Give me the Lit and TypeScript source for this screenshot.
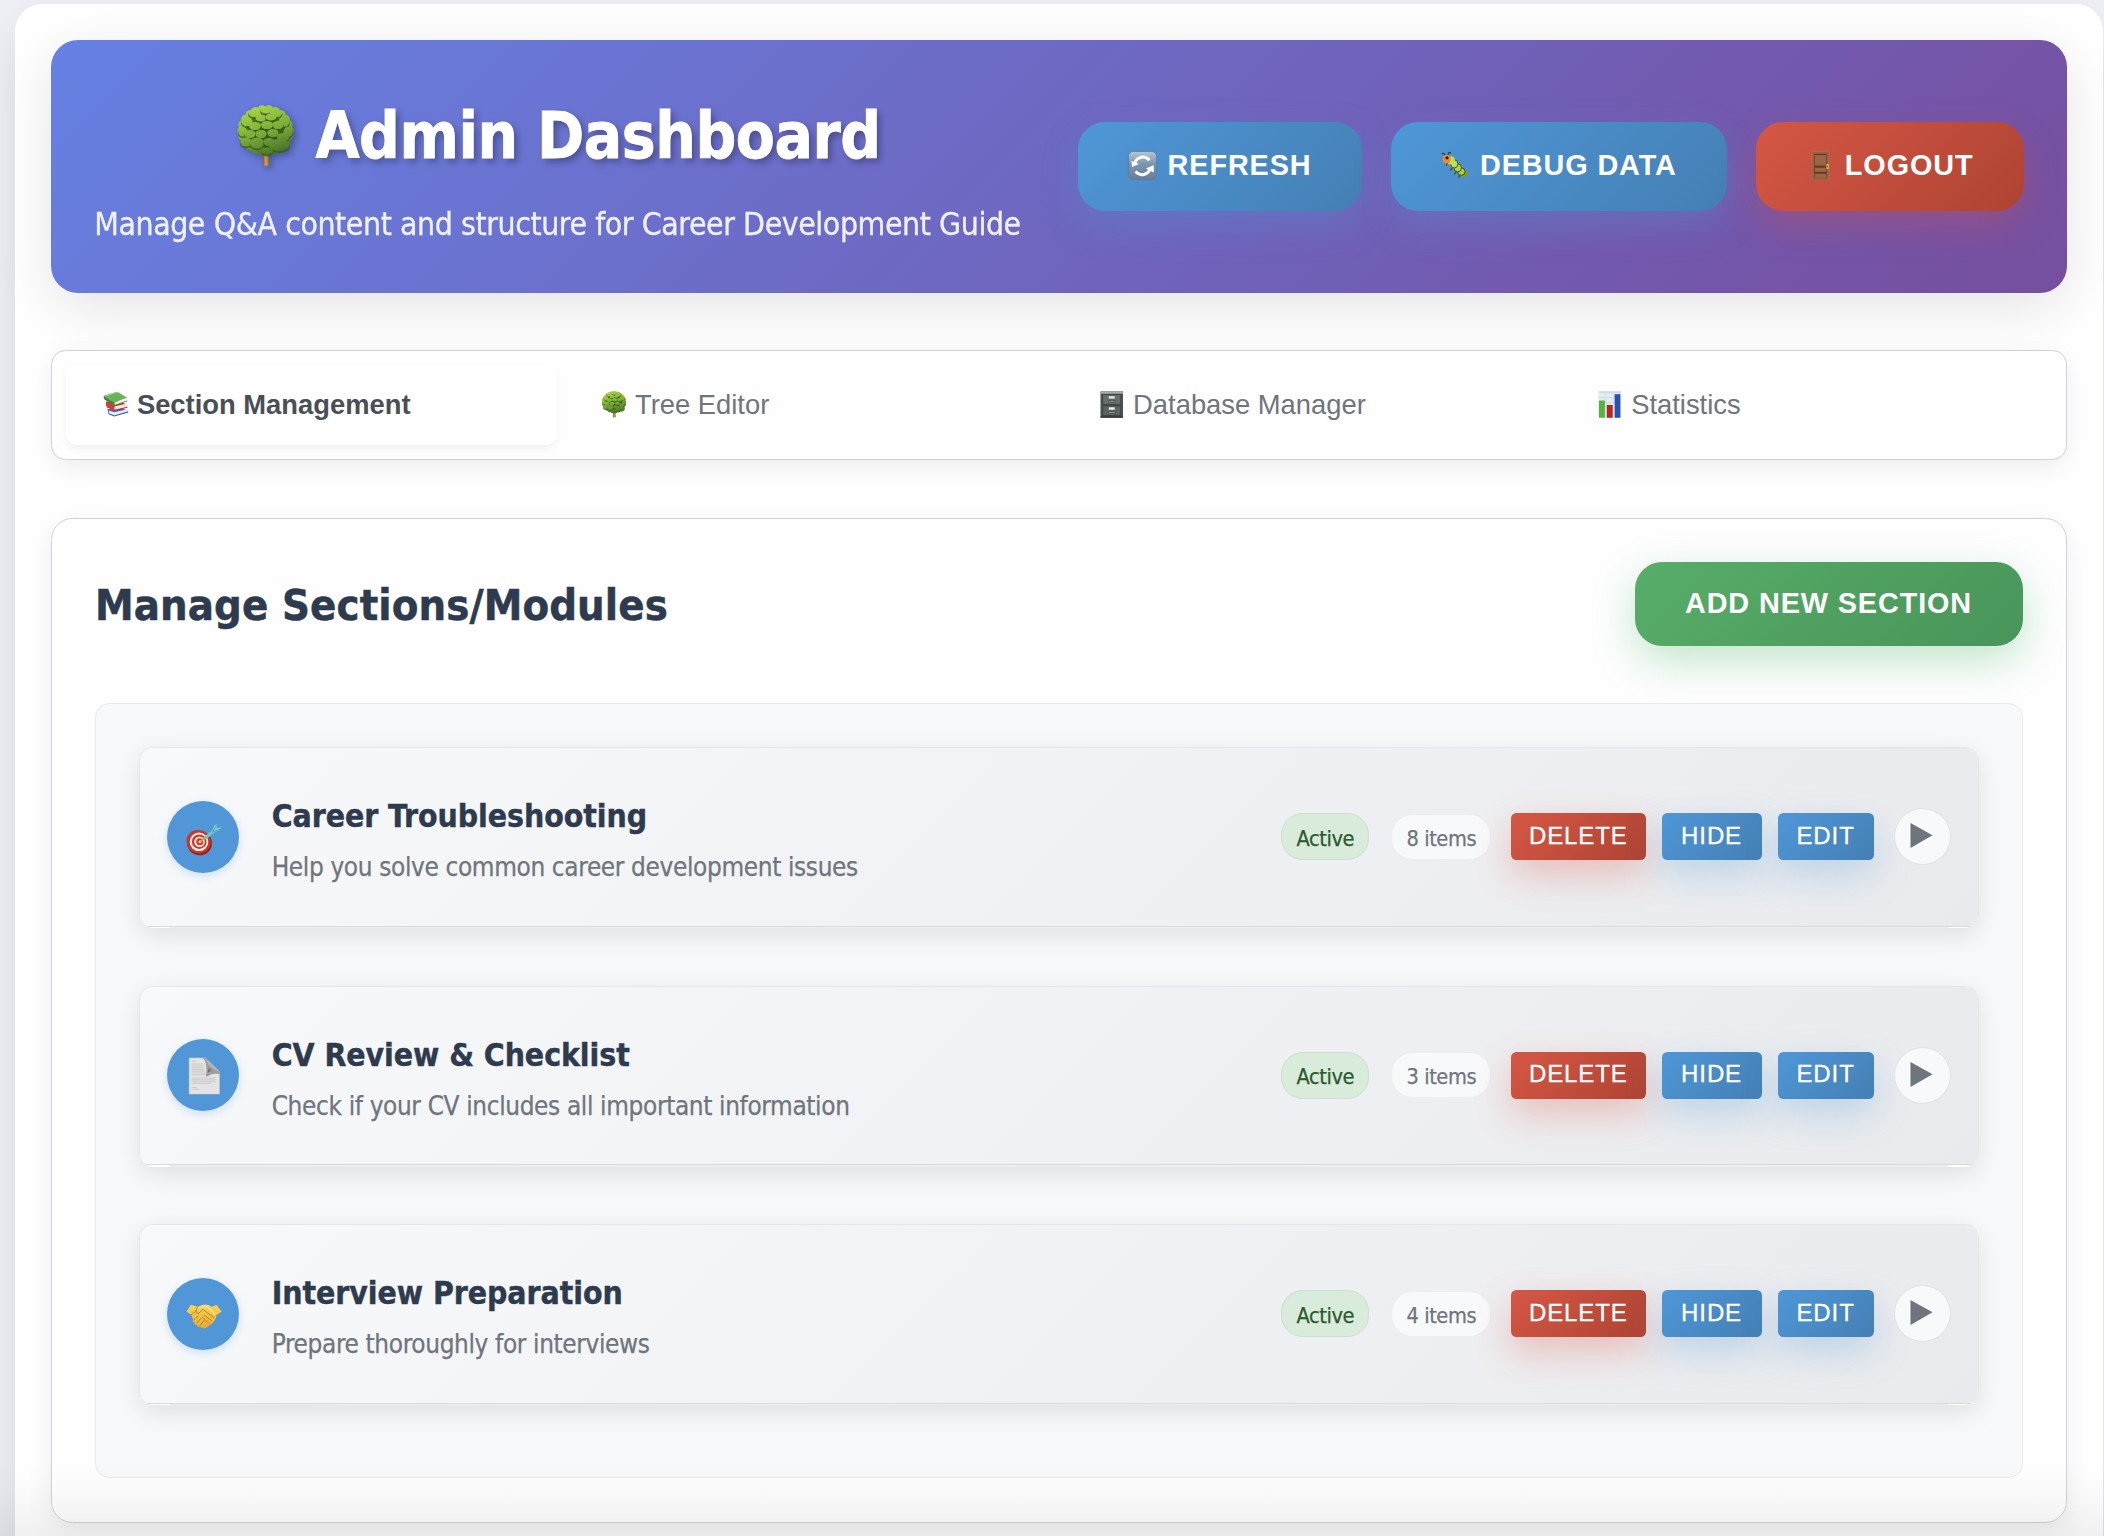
import { LitElement, html, svg, css } from "lit";
import { customElement, property, state } from "lit/decorators.js";
import { classMap } from "lit/directives/class-map.js";

type IconName =
  | "tree" | "refresh" | "bug" | "door" | "books"
  | "cabinet" | "chart" | "target" | "page" | "handshake";

const ring = Array.from({ length: 22 }, (_, i) => {
  const a = (i / 22) * Math.PI * 2;
  return [28.5 + Math.cos(a) * 23.6, 25.5 + Math.sin(a) * 21] as const;
});

/* x, y, rx, ry of the leaf clumps, from the back to the front */
const clumps = [
  [18, 8, 7, 4.5], [29, 5, 6, 4], [39, 8, 6.5, 4.5], [10, 17, 6, 4.5], [47, 17, 6, 5],
  [24, 13, 6, 4], [34, 12, 6, 4], [18, 21, 6.5, 4.5], [41, 20, 6, 4.5], [6, 27, 5, 5],
  [30, 20, 6.5, 4.5], [51, 27, 5, 5.5], [13, 29, 6, 4.5], [36, 28, 6, 4.5], [24, 29, 6, 4.5],
  [46, 32, 6.5, 4.5], [9, 37, 6, 5], [20, 38, 7.5, 6], [32, 37, 6, 4.5], [42, 40, 11, 6.5],
  [30, 46, 6, 4],
];

const icons: Record<IconName, { box: string; body: unknown }> = {
  tree: {
    box: "0 0 58 62",
    body: svg`
      <defs>
        <linearGradient id="leaf" gradientUnits="userSpaceOnUse" x1="20" y1="0" x2="38" y2="52">
          <stop offset="0" stop-color="#a9d649"/><stop offset=".5" stop-color="#7dad38"/><stop offset="1" stop-color="#456d27"/>
        </linearGradient>
        <linearGradient id="back" x1="0" y1="0" x2=".3" y2="1">
          <stop offset="0" stop-color="#5e8e29"/><stop offset="1" stop-color="#2a4817"/>
        </linearGradient>
        <linearGradient id="bark"><stop offset="0" stop-color="#7d5a25"/><stop offset=".45" stop-color="#d3a35a"/><stop offset="1" stop-color="#8a6229"/></linearGradient>
      </defs>
      <path d="M26 46h5.5l.8 14.2q-3.2 1.4-6.4 0z" fill="url(#bark)"/>
      <ellipse cx="28.5" cy="26" rx="26" ry="23.5" fill="url(#back)"/>
      ${ring.map(([x, y]) => svg`<circle cx=${x} cy=${y} r="4.5" fill="url(#leaf)"/>`)}
      ${clumps.map(([x, y, rx, ry]) => svg`
        <ellipse cx=${x} cy=${y + 1.5} rx=${rx} ry=${ry} fill="#35591b" opacity=".7"/>
        <ellipse cx=${x} cy=${y} rx=${rx - 0.4} ry=${ry - 0.4} fill="url(#leaf)"/>`)}`,
  },
  refresh: {
    box: "0 0 29 29",
    body: svg`
      <defs><linearGradient id="key" x1="0" y1="0" x2="0" y2="1">
        <stop offset="0" stop-color="#b3c6d9"/><stop offset=".45" stop-color="#7c95b1"/><stop offset="1" stop-color="#6a7d98"/></linearGradient></defs>
      <rect x=".4" y=".4" width="28.2" height="28.2" rx="5" fill="url(#key)" stroke="#59789a" stroke-width=".8"/>
      <path d="M6.7 12.4a8.4 8.4 0 0 1 14.7-3.2" fill="none" stroke="#fff" stroke-width="3"/>
      <path d="M22.3 17.4a8.4 8.4 0 0 1-14.7 3" fill="none" stroke="#fff" stroke-width="3"/>
      <path d="M3.6 9.7l.4 6.3 7-3z" fill="#fff"/>
      <path d="M25.6 14.2l.2 7.2-8-4z" fill="#fff"/>`,
  },
  bug: {
    box: "0 0 29 29",
    body: svg`
      <path d="M4.5 4.8Q3 1.8.9 2.6M7 3.7Q7.4 1 10 1.7" fill="none" stroke="#31373c" stroke-width="1.3"/>
      <path d="M6 12l-.8 2.8M11 17l-1.5 2.5M15 21l-1.5 2.3M19 24.5l-1.5 2" stroke="#6b4a1e" stroke-width="1.5"/>
      <ellipse cx="23.4" cy="23" rx="3.8" ry="2.9" fill="#7e9a2c"/>
      <ellipse cx="20.3" cy="20.6" rx="3.7" ry="3.8" fill="#a9cc3f" stroke="#2f3b17" stroke-width=".8"/>
      <ellipse cx="16.7" cy="16.8" rx="3.7" ry="4" fill="#b4d847" stroke="#2f3b17" stroke-width=".8"/>
      <ellipse cx="13.3" cy="12.9" rx="3.7" ry="4" fill="#c0e151" stroke="#2f3b17" stroke-width=".8"/>
      <ellipse cx="10" cy="9.4" rx="3.9" ry="4.100" fill="#bfdf50"/>
      <ellipse cx="5.6" cy="8" rx="4" ry="4.200" fill="#ee8a2b"/>
      <circle cx="6" cy="6.8" r="1.600" fill="#2b1a12"/>`,
  },
  door: {
    box: "0 0 29 29",
    body: svg`
      <rect x="5.5" width="18" height="29" fill="#b0694c"/>
      <rect x="6.7" y="1.2" width="15.6" height="27.2" fill="#925d40"/>
      <path d="M8.5 3h11.8v10.500H8.500zM8.500 15.500h11.800v4.500H8.500zM8.500 21.500h11.800v5H8.500z" fill="#9b6546"/>
      <path d="M8.5 3h11.8v1H8.500zM8.500 14.800h11.800v2H8.500zM8.500 21h11.800v1.700H8.500z" fill="#633723"/>
      <path d="M8.5 3v23.500M20.300 3v23.500" stroke="#6f422b" stroke-width=".7"/>
      <rect x="20.3" y="13" width="2.5" height="5" rx="1" fill="#e5c23e"/>
      <circle cx="21.3" cy="15.5" r="1" fill="#8c6a13"/>`,
  },
  books: {
    box: "0 0 27 27",
    body: svg`
      <path d="M4.5 18l14-1.2 7.200 3.200-14.500 4.700-5.700-2z" fill="#4a64b8"/>
      <path d="M6 19.5l5.500 2 13.500-3.200.3 2.700L11.700 24.800l-5.500-2z" fill="#e9eaf2"/>
      <path d="M6 22.5l5.500 2.100 14.200-4.200v1.200L11.600 25.800l-6-2.300z" fill="#3c55a8"/>
      <path d="M3 10.5l14.500-.5 7.500 4.200L11.500 18 4 15z" fill="#c8402c"/>
      <path d="M11.5 15.500L24.600 12.500v3.800l-13.100 3z" fill="#efe8e6"/>
      <path d="M3 11l8.500 3.500v5.200L4 16.600Q2.500 14 3 11z" fill="#d2402c"/>
      <path d="M11.2 19l13.700-3.200v1L11.300 20.200z" fill="#b32a20"/>
      <path d="M.8 4.700L14.500.5l10.300 6L11 11.800z" fill="#6bb25c"/>
      <path d="M.8 4.700L14.500.5l1.200.7L2.300 5.500z" fill="#92cf80"/>
      <path d="M11.500 11.800L24.500 6.600q-1 1.800.3 3.200L12 14.200z" fill="#f0f1ee"/>
      <path d="M.8 4.700L11 11.500q.8 1.400.8 3.400L1.500 8.300Q.4 6.400.8 4.700z" fill="#3c8546"/>
      <path d="M11.7 14L24.800 9.300v1L11.800 15z" fill="#3b7d40"/>`,
  },
  cabinet: {
    box: "0 0 27 27",
    body: svg`
      <rect x="1.5" width="23" height="27" rx="1" fill="#4d5352"/>
      <rect x="1.5" width="23" height="2.6" rx=".8" fill="#a5abaa"/>
      <rect x="3.8" y="3.5" width="18.4" height="10" fill="#686e6c" stroke="#3a3f3e" stroke-width=".8"/>
      <rect x="3.8" y="15" width="18.4" height="9.8" fill="#5d6361" stroke="#3a3f3e" stroke-width=".8"/>
      <path d="M10 5h6v2.400h-6zM10 16.400h6v2.400h-6z" fill="#eceeed"/>
      <path d="M9.500 9.300h7v1.700h-7zM9.500 20.700h7v1.700h-7z" fill="#b4b8b7" stroke="#3b403f" stroke-width=".8"/>
      <path d="M1.5 25.500h23V27h-23z" fill="#333837"/>`,
  },
  chart: {
    box: "0 0 27 27",
    body: svg`
      <rect x="1.5" width="23" height="27" fill="#e3ebf3"/>
      <path d="M1.5 0h23v2h-23z" fill="#d2dbe3"/>
      <path d="M1.5 6.500h23M1.500 11.500h23M1.500 16.500h23M1.500 21.500h23M9 2v25M17 2v25" stroke="#cbd6e3" stroke-width=".7"/>
      <rect x="2" y="9.500" width="6" height="17.500" fill="#55b53c"/>
      <rect x="10" y="14" width="6" height="13" fill="#b3271f"/>
      <rect x="18" y="3" width="5.800" height="24" fill="#2453b4"/>`,
  },
  target: {
    box: "0 0 36 36",
    body: svg`
      <ellipse cx="13.5" cy="23" rx="12.500" ry="12.200" transform="rotate(35 13.500 23)" fill="#8e2018"/>
      <ellipse cx="12.6" cy="21.800" rx="12.300" ry="11.600" transform="rotate(35 12.600 21.800)" fill="#cf3527"/>
      <circle cx="13" cy="21.800" r="9.300" fill="#f6efed"/>
      <circle cx="13.200" cy="21.700" r="7.300" fill="#cc3527"/>
      <circle cx="13.500" cy="21.700" r="5.300" fill="#f6efed"/>
      <circle cx="13.800" cy="21.700" r="3.500" fill="#cc3527"/>
      <circle cx="14" cy="21.700" r="1.500" fill="#f6efed"/>
      <path d="M14 22L20 17" stroke="#d6a531" stroke-width="1.800"/>
      <path d="M18.500 18.500L30 9" stroke="#6cc6c9" stroke-width="3.200"/>
      <path d="M26 12l2.300-6.500L31.500 4l-.7 4.500 5-1.200-2 3-7 2.500z" fill="#7fd3d2"/>
      <path d="M26.500 12L35.500 8.800M26.500 12L31.200 4.500" stroke="#3f989f" stroke-width=".8"/>`,
  },
  page: {
    box: "0 0 36 36",
    body: svg`
      <defs><linearGradient id="fold" x1=".15" y1="1" x2=".75" y2=".25"><stop offset="0" stop-color="#4a4a4a"/><stop offset=".5" stop-color="#a9a9a9"/><stop offset="1" stop-color="#f4f4f4"/></linearGradient></defs>
      <path d="M3.2 0H19.500L33.400 13.500V36H3.200z" fill="#e4e4e4" stroke="#cfcfcf" stroke-width=".6"/>
      <path d="M5.500 3.200h5M5.500 6h12M5.500 7.800h12M5.500 9.600h12M5.500 11.400h13M5.500 13.200h13M5.500 15h14M5.500 16.800h18M5.500 20h24M5.500 21.800h24M5.500 23.600h24M5.500 25.400h20M5.500 29.500h5M5.500 31.300h8" stroke="#c4c4c4" stroke-width=".8"/>
      <path d="M16.500 0q5 3 3.500 19 6-4.500 13.400-3v-2.500L19.500 0z" fill="#666" opacity=".55"/>
      <path d="M18.500 0q5.500 4.500 3.300 14.500 5-3.300 11.700-1z" fill="url(#fold)"/>`,
  },
  handshake: {
    box: "0 0 36 36",
    body: svg`
      <defs><linearGradient id="skin" x1="0" y1="0" x2="0" y2="1"><stop offset="0" stop-color="#f8d45c"/><stop offset="1" stop-color="#e6ab34"/></linearGradient></defs>
      <path d="M.3 14.500L5 7.700l6.500 2 5.500-2q5-.8 8.500 2l5-1.600 5.300 6.400-5.300 3.700q-1 5.800-5.500 9.300l-5 3.200q-2 1.500-3.500-.3-1.800 1-3-.8-1.900.5-2.700-1.500-2.300 0-2.300-2.500-2.500-.5-1.500-3.100l-1.800-4.700z" fill="url(#skin)"/>
      <path d="M11.500 9.900q-1.500 2-1.500 5.700 2 2.400 4.600-.9l2.400-2.200 11 8.200M5.200 17.800l4.300-3.500M8 23l4-4M11 25.700l4.200-4.400M14.500 28l3.700-4.500M18 18l7.500 5.500M16.500 20.500l6 5.300" fill="none" stroke="#b57a1c" stroke-width=".9" stroke-linecap="round"/>
      <path d="M13 11q4.500-3 9-.5l7 6.500" fill="none" stroke="#fbe184" stroke-width="1.600" stroke-linecap="round"/>`,
  },
};

@customElement("emoji-icon")
class EmojiIcon extends LitElement {
  static styles = css`
    :host { display: block; flex: none; }
    svg { display: block; width: 100%; height: 100%; overflow: visible; }
  `;
  @property() name: IconName = "tree";
  render() {
    const icon = icons[this.name];
    return html`<svg viewBox=${icon.box} aria-hidden="true">${icon.body}</svg>`;
  }
}

@customElement("action-button")
class ActionButton extends LitElement {
  static styles = css`
    :host { display: block; flex: none; }
    button {
      box-sizing: border-box; width: 100%; height: 89px; border: 0; border-radius: 27px; padding: 0 1px 2px 0;
      display: flex; align-items: center; justify-content: center; gap: 8.9px; color: #fff;
      font: bold 28.8px/1 "Liberation Sans", Arial, sans-serif; letter-spacing: 0.9px;
      text-transform: uppercase; white-space: nowrap;
    }
    emoji-icon { width: 29px; height: 29px; margin-right: 1.4px; }
    .blue { background: linear-gradient(135deg, #4f97d8, #447fb3); box-shadow: 0 14.4px 36px rgba(79, 151, 216, 0.3); }
    .red { background: linear-gradient(135deg, #d65745, #ae4332); box-shadow: 0 14.4px 36px rgba(220, 80, 62, 0.3); }
    .green { background: linear-gradient(135deg, #58ad69, #489559); box-shadow: 0 14.4px 43px rgba(72, 175, 98, 0.32); height: 84px; }
    .small { height: 47px; border-radius: 5.4px; font-weight: normal; font-size: 24px; padding-bottom: 2px; -webkit-text-stroke: 0.3px #fff; }
  `;
  @property() tone = "blue";
  @property() icon?: IconName;
  @property({ type: Boolean }) small = false;
  render() {
    return html`<button class=${classMap({ [this.tone]: true, small: this.small })}>
      ${this.icon ? html`<emoji-icon name=${this.icon}></emoji-icon>` : ""}<span><slot></slot></span>
    </button>`;
  }
}

@customElement("section-card")
class SectionCard extends LitElement {
  static styles = css`
    :host {
      display: block; box-sizing: border-box; height: 181px; border-radius: 14.4px;
      border: 1px solid #e4e6e9; border-bottom: 0; overflow: hidden;
      background: linear-gradient(90deg, #fff 29px, #eceef0 30px, #eceef0 calc(100% - 30px), #fff calc(100% - 29px));
      box-shadow: 0 7.2px 27px rgba(0, 0, 0, 0.1);
    }
    .row {
      box-sizing: border-box; height: 178.5px; border-bottom: 1px solid #d8dadd; padding: 0 27px 0 26px;
      display: flex; align-items: center; background: linear-gradient(135deg, #f8f9fb, #e9eaed);
    }
    .badge {
      width: 72px; height: 72px; border-radius: 50%; background: #5196d6; flex: none; box-sizing: border-box; margin-left: 1px;
      padding: 19px 17px 17px 19px; box-shadow: 0 3px 9px rgba(81, 150, 214, 0.25);
    }
    .badge emoji-icon { width: 36px; height: 36px; }
    .text { flex: 1; padding: 9px 0 0 32.5px; }
    h3 { margin: 0 0 14px; font-size: 31.68px; line-height: 38px; letter-spacing: -0.06px; color: #2e3b4e; -webkit-text-stroke: 0.4px #2e3b4e; }
    p { margin: 0; font-size: 25.92px; line-height: 36px; letter-spacing: -0.36px; color: #6e757d; -webkit-text-stroke: 0.25px #6e757d; }
    .pill {
      box-sizing: border-box; display: flex; align-items: center; justify-content: center;
      border-radius: 21.6px; font-size: 21.6px; letter-spacing: -0.4px; padding-top: 3px;
    }
    .active { width: 88px; height: 47px; background: #d9ebda; border: 1px solid #c8e2cb; color: #2b5a2d; -webkit-text-stroke: 0.25px #2b5a2d; }
    .count { width: 100px; height: 46px; margin: 0 20px 0 22px; background: #f8f9fb; border: 1px solid #eceef0; color: #6e757d; -webkit-text-stroke: 0.25px #6e757d; }
    .actions { display: flex; gap: 16px; }
    .delete { width: 135px; }
    .hide { width: 99.5px; }
    .edit { width: 96.5px; }
    .toggle {
      width: 57px; height: 57px; box-sizing: border-box; margin-left: 19.5px; border-radius: 50%; padding: 14px 17px 16px 15px;
      background: #f8f9fb; border: 1px solid #dfe2e6;
    }
    .toggle svg { display: block; }
  `;
  @property() icon: IconName = "target";
  @property() heading = "";
  @property() summary = "";
  @property({ type: Number }) count = 0;
  render() {
    return html`<div class="row">
      <div class="badge"><emoji-icon name=${this.icon}></emoji-icon></div>
      <div class="text"><h3>${this.heading}</h3><p>${this.summary}</p></div>
      <span class="pill active">Active</span>
      <span class="pill count">${this.count} items</span>
      <div class="actions">
        <action-button class="delete" tone="red" small>Delete</action-button>
        <action-button class="hide" small>Hide</action-button>
        <action-button class="edit" small>Edit</action-button>
      </div>
      <button class="toggle" aria-label="Expand"><svg width="23" height="25" viewBox="0 0 23 25"><path d="M.5 0L22.5 12.3.5 25z" fill="#6e757d"/></svg></button>
    </div>`;
  }
}

@customElement("app-root")
class AppRoot extends LitElement {
  static styles = css`
    :host {
      display: block; position: relative; box-sizing: border-box; height: 1536px; overflow: hidden; padding: 4px 1px 0 15px;
      background: #f0f1f6; font-family: "DejaVu Sans Condensed", "DejaVu Sans", sans-serif; font-stretch: condensed;
    }
    .page {
      box-sizing: border-box; height: 1700px; padding: 36px; border-radius: 27px; background: #fff;
      box-shadow: 0 18px 54px rgba(0, 0, 0, 0.1);
    }
    header {
      box-sizing: border-box; height: 253px; padding: 0 43px; border-radius: 27px; display: flex; align-items: center;
      justify-content: space-between; color: #fff; background: linear-gradient(135deg, #6681e3, #764e9f);
      box-shadow: 0 14.4px 57.6px rgba(0, 0, 0, 0.11);
    }
    .title { width: 928px; text-align: center; }
    h1 {
      margin: 3px 0 11px; font-size: 63.36px; line-height: 101.4px; letter-spacing: -0.45px; padding-left: 2px;
      display: flex; justify-content: center; align-items: center; gap: 20px; text-shadow: 3.6px 3.6px 7.2px rgba(0, 0, 0, 0.3);
      -webkit-text-stroke: 0.8px #fff;
    }
    h1 emoji-icon { width: 58px; height: 62px; margin-bottom: 3px; filter: drop-shadow(3.6px 3.6px 3.6px rgba(0, 0, 0, 0.3)); }
    header p {
      margin: 0 0 0 -1px; font-size: 31.68px; line-height: 50.7px; letter-spacing: -0.41px; opacity: 0.9; white-space: nowrap;
      -webkit-text-stroke: 0.3px #fff;
    }
    .tools { display: flex; gap: 28.8px; }
    .refresh { width: 284px; }
    .debug { width: 336px; }
    .logout { width: 268px; }
    .add { width: 388px; }
    nav {
      box-sizing: border-box; height: 110px; margin: 57px 0 58px; padding: 14.4px; border: 1px solid #cfd2d7; border-radius: 14.4px;
      display: grid; grid-template-columns: repeat(4, 1fr); gap: 7.2px; background: #fefefe; box-shadow: 0 7.2px 27px rgba(0, 0, 0, 0.07);
    }
    .tab {
      display: flex; align-items: center; padding: 0 0 1px 36.5px; gap: 7.5px; border: 0; border-radius: 10.8px; background: none;
      font: 27.36px/1 "Liberation Sans", Arial, sans-serif; color: #6e757d; white-space: nowrap;
    }
    .tab emoji-icon { width: 26.5px; height: 27px; }
    .tab emoji-icon[name="tree"] { margin: 0 -0.5px 0 0.5px; }
    .tab.on { background: #fff; font-weight: bold; color: #494f56; box-shadow: 0 3.6px 7.2px rgba(0, 0, 0, 0.05); }
    .panel {
      box-sizing: border-box; height: 1005px; border: 1px solid #cfd2d7; border-radius: 21.6px; padding: 43px 43px 0;
      background: #fefefe; box-shadow: 0 7.2px 27px rgba(0, 0, 0, 0.08);
    }
    .panel-head { height: 84px; display: flex; align-items: center; justify-content: space-between; margin-bottom: 57px; }
    h2 { margin: 0; padding-top: 1px; font-size: 43.2px; line-height: 84px; letter-spacing: 0.08px; color: #2e3b4e; -webkit-text-stroke: 0.5px #2e3b4e; }
    .list {
      box-sizing: border-box; height: 775px; padding: 43.2px; border: 1px solid #e8eaed; border-radius: 14.4px;
      background: #f8f9fb; display: flex; flex-direction: column; gap: 57.5px;
    }
    .fade {
      position: absolute; left: 0; right: 0; bottom: 0; height: 76px; pointer-events: none;
      background: linear-gradient(rgba(0, 0, 0, 0), rgba(0, 0, 0, 0.015) 40%, rgba(0, 0, 0, 0.06));
    }
  `;
  @state() private current = 0;
  private tabs: { icon: IconName; label: string }[] = [
    { icon: "books", label: "Section Management" },
    { icon: "tree", label: "Tree Editor" },
    { icon: "cabinet", label: "Database Manager" },
    { icon: "chart", label: "Statistics" },
  ];
  private sections: { icon: IconName; heading: string; summary: string; count: number }[] = [
    { icon: "target", heading: "Career Troubleshooting", summary: "Help you solve common career development issues", count: 8 },
    { icon: "page", heading: "CV Review & Checklist", summary: "Check if your CV includes all important information", count: 3 },
    { icon: "handshake", heading: "Interview Preparation", summary: "Prepare thoroughly for interviews", count: 4 },
  ];
  render() {
    return html`<main class="page">
        <header>
          <div class="title">
            <h1><emoji-icon name="tree"></emoji-icon><span>Admin Dashboard</span></h1>
            <p>Manage Q&amp;A content and structure for Career Development Guide</p>
          </div>
          <div class="tools">
            <action-button class="refresh" icon="refresh">Refresh</action-button>
            <action-button class="debug" icon="bug">Debug Data</action-button>
            <action-button class="logout" icon="door" tone="red">Logout</action-button>
          </div>
        </header>
        <nav>
          ${this.tabs.map((t, i) => html`<button class=${classMap({ tab: true, on: i === this.current })} @click=${() => (this.current = i)}>
            <emoji-icon name=${t.icon}></emoji-icon><span>${t.label}</span>
          </button>`)}
        </nav>
        <section class="panel">
          <div class="panel-head">
            <h2>Manage Sections/Modules</h2>
            <action-button class="add" tone="green">Add New Section</action-button>
          </div>
          <div class="list">
            ${this.sections.map((s) => html`<section-card .icon=${s.icon} .heading=${s.heading} .summary=${s.summary} .count=${s.count}></section-card>`)}
          </div>
        </section>
      </main>
      <div class="fade"></div>`;
  }
}
